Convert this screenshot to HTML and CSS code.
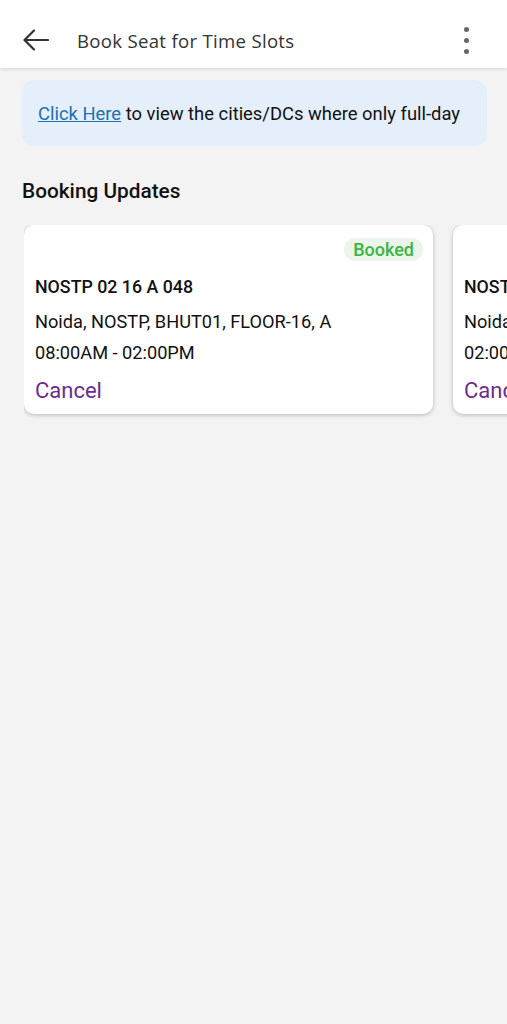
FILE: index.html
```html
<!DOCTYPE html>
<html lang="en">
<head>
  <meta charset="UTF-8" />
  <meta name="viewport" content="width=device-width, initial-scale=1.0"/>
  <title>Book Seat for Time Slots</title>
  <link rel="stylesheet" href="styles.css">
</head>
<body>
  <header class="topbar">
    <button class="icon-btn back-btn" aria-label="Back">
      <svg width="26" height="22" viewBox="0 0 26 22" fill="none" stroke="#333" stroke-width="2.2" stroke-linecap="round" stroke-linejoin="round">
        <path d="M25 11H2"/>
        <path d="M11 1.5L1.5 11L11 20.5"/>
      </svg>
    </button>
    <h1 class="topbar-title">Book Seat for Time Slots</h1>
    <button class="icon-btn menu-btn" aria-label="More">
      <span class="dot"></span>
      <span class="dot"></span>
      <span class="dot"></span>
    </button>
  </header>

  <main class="content">
    <div class="notice">
      <a href="#" class="notice-link">Click Here</a> to view the cities/DCs where only full-day
    </div>

    <h2 class="section-title">Booking Updates</h2>

    <div class="card-row">
      <div class="booking-card">
        <div class="card-top">
          <span class="badge">Booked</span>
        </div>
        <div class="seat">NOSTP 02 16 A 048</div>
        <div class="line">Noida, NOSTP, BHUT01, FLOOR-16, A</div>
        <div class="line time">08:00AM - 02:00PM</div>
        <a href="#" class="cancel">Cancel</a>
      </div>
      <div class="booking-card">
        <div class="card-top">
          <span class="badge">Booked</span>
        </div>
        <div class="seat">NOSTP 02 16 A 048</div>
        <div class="line">Noida, NOSTP, BHUT01, FLOOR-16, A</div>
        <div class="line time">02:00PM - 08:00PM</div>
        <a href="#" class="cancel">Cancel</a>
      </div>
    </div>
  </main>
</body>
</html>
```

FILE: styles.css
```css
body {
  margin: 0;
  font-family: Roboto, "Liberation Sans", Arial, sans-serif;
  background-color: #f3f3f3;
  min-height: 100vh;
  color: #111;
}
.topbar {
  height: 68px;
  box-sizing: border-box;
  padding-top: 12px;
  background-color: #fff;
  display: flex;
  align-items: center;
  box-shadow: 0 1px 4px rgba(0, 0, 0, 0.12);
  position: relative;
  z-index: 1;
}
.icon-btn {
  background: none;
  border: none;
  padding: 0;
  cursor: pointer;
}
.back-btn {
  width: 26px;
  height: 22px;
  margin-left: 23px;
}
.back-btn svg {
  display: block;
}
.topbar-title {
  margin: 0 0 0 28px;
  font-family: "Open Sans", sans-serif;
  font-size: 18.6px;
  font-weight: 400;
  color: #333;
  flex: 1;
  letter-spacing: 0.3px;
}
.menu-btn {
  display: flex;
  flex-direction: column;
  gap: 6px;
  margin-right: 38px;
}
.dot {
  width: 5px;
  height: 5px;
  border-radius: 50%;
  background-color: #666;
}
.content {
  padding: 12px 20px 0 22px;
}
.notice {
  background-color: #e5effb;
  border-radius: 12px;
  height: 66px;
  box-sizing: border-box;
  padding: 23px 0 0 16px;
  font-size: 18.4px;
  color: #111;
  white-space: nowrap;
  overflow: hidden;
}
.notice-link {
  color: #2070b0;
  text-decoration: underline;
}
.section-title {
  margin: 33px 0 0;
  font-size: 20.8px;
  font-weight: 500;
  line-height: 25px;
  color: #111;
}
.card-row {
  display: flex;
  gap: 20px;
  margin: 21px -20px 0 2px;
  overflow: hidden;
  padding-bottom: 8px;
}
.booking-card {
  flex: 0 0 409px;
  box-sizing: border-box;
  height: 189px;
  background-color: #fff;
  border-radius: 10px;
  box-shadow: 0 1px 4px rgba(0, 0, 0, 0.25);
  padding: 13px 10px 0 11px;
}
.card-top {
  display: flex;
  justify-content: flex-end;
}
.badge {
  background-color: #e9f6e9;
  color: #3db444;
  font-size: 18px;
  font-weight: 500;
  border-radius: 12px;
  padding: 1px 9px 1px;
  line-height: 21px;
}
.seat {
  margin-top: 15px;
  font-size: 17.8px;
  font-weight: 500;
  line-height: 22px;
}
.line {
  font-size: 18.2px;
  line-height: 22px;
  margin-top: 13px;
}
.line.time {
  margin-top: 9px;
}
.cancel {
  display: block;
  margin-top: 14px;
  font-size: 22px;
  line-height: 26px;
  color: #6b2d8f;
  text-decoration: none;
}
```
